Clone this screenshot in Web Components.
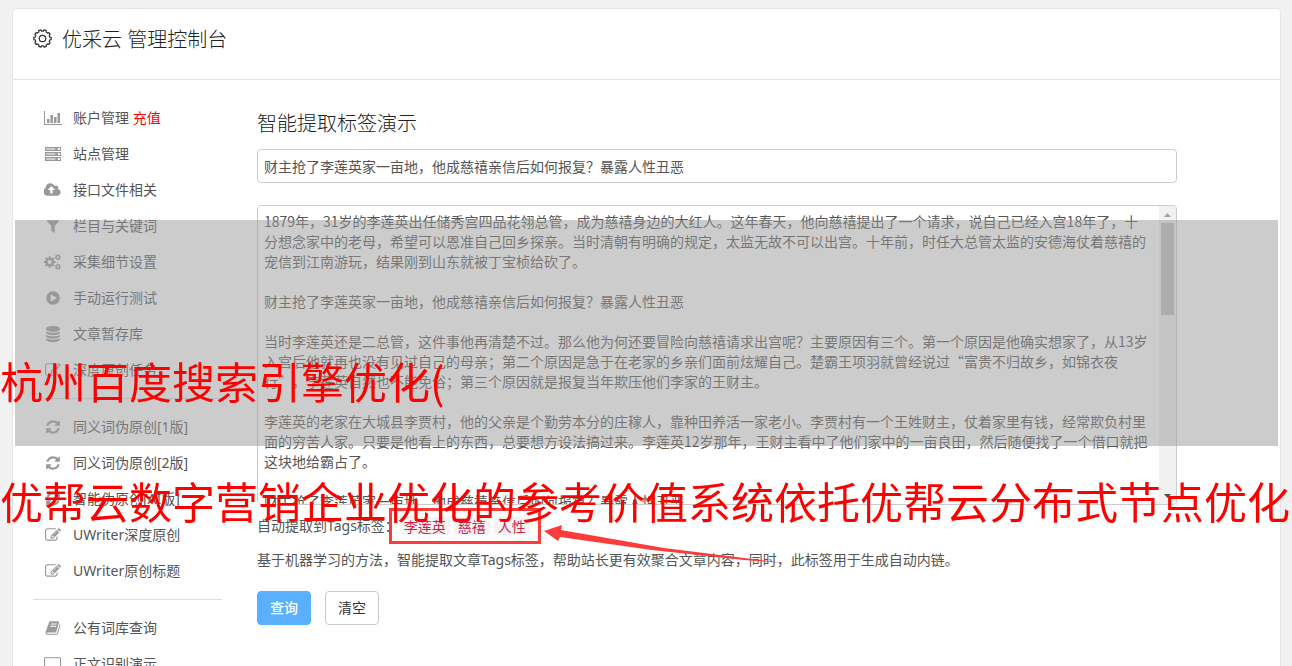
<!DOCTYPE html>
<html lang="zh-CN">
<head>
<meta charset="utf-8">
<title>优采云 管理控制台</title>
<style>
html, body { margin: 0; height: 100%; }
body {
  overflow: hidden; position: relative; background: #f1f1f1; color: #555;
  font: 14px/20px "Noto Sans", "Noto Sans CJK SC", sans-serif;
  text-spacing-trim: space-all;
}
</style>
</head>
<body>
<console-page>
  <side-nav slot="nav">
    <nav-item icon="chart">账户管理 <b>充值</b></nav-item>
    <nav-item icon="server">站点管理</nav-item>
    <nav-item icon="cloud">接口文件相关</nav-item>
    <nav-item icon="filter">栏目与关键词</nav-item>
    <nav-item icon="cogs">采集细节设置</nav-item>
    <nav-item icon="play">手动运行测试</nav-item>
    <nav-item icon="database">文章暂存库</nav-item>
    <nav-item icon="edit">深度原创任务</nav-item>
    <hr>
    <nav-item icon="refresh">同义词伪原创[1版]</nav-item>
    <nav-item icon="refresh">同义词伪原创[2版]</nav-item>
    <nav-item icon="refresh">智能伪原创[AI版]</nav-item>
    <nav-item icon="edit">UWriter深度原创</nav-item>
    <nav-item icon="edit">UWriter原创标题</nav-item>
    <hr>
    <nav-item icon="book">公有词库查询</nav-item>
    <nav-item icon="laptop">正文识别演示</nav-item>
  </side-nav>
  <tag-demo></tag-demo>
</console-page>
<banner-overlay>
  <span slot="first">杭州百度搜索引擎优化(</span>
  <span slot="second">优帮云数字营销企业优化的参考价值系统依托优帮云分布式节点优化</span>
</banner-overlay>

<script>
// Closed outline of a gear centred on (cx, cy).
function gear(cx, cy, outer, inner, teeth) {
  const pts = [];
  for (let i = 0; i < teeth; i++) {
    const a = i * 2 * Math.PI / teeth, s = Math.PI / teeth;
    for (const [d, r] of [[-0.62, inner], [-0.4, outer], [0.4, outer], [0.62, inner]]) {
      pts.push((cx + r * Math.cos(a + d * s)).toFixed(2) + ' ' + (cy + r * Math.sin(a + d * s)).toFixed(2));
    }
  }
  return 'M' + pts.join('L') + 'z';
}
function hole(cx, cy, r) {
  return `M${cx - r} ${cy}a${r} ${r} 0 1 0 ${2 * r} 0a${r} ${r} 0 1 0 ${-2 * r} 0z`;
}
const disc = 'q119 84 325 127t443 43 443-43 325-127v170q0 69-103 128t-280 93.500-385 34.500-385-34.500-280-93.500-103-128z';
const ICONS = {
  chart: [2048, 'M0 112h112v1456h1936v112h-2048zM336 1008h280v448h-280zM728 560h280v896h-280zM1120 784h280v672h-280zM1512 336h280v1120h-280z'],
  server: [1792, [112, 672, 1232].map(y => `M0 ${y}h1792v448h-1792zM128 ${y + 168}v112h1024v-112zM1440 ${y + 112}v224h224v-224z`).join('')],
  cloud: [1920, 'M1216 864q0-14-9-23l-352-352q-9-9-23-9t-23 9l-351 351q-10 12-10 24 0 14 9 23t23 9h224v352q0 13 9.500 22.500t22.500 9.500h192q13 0 22.500-9.500t9.500-22.500v-352h224q13 0 22.500-9.500t9.500-22.500zm640 288q0 159-112.500 271.500t-271.500 112.500h-1088q-185 0-316.500-131.500t-131.500-316.500q0-130 70-240t188-165q-2-30-2-43 0-212 150-362t362-150q156 0 285.500 87t188.500 231q71-62 166-62 106 0 181 75t75 181q0 76-41 138 130 31 213.500 135.500t83.500 238.500z'],
  filter: [1792, 'M1595 295q17 41-14 70l-493 493v742q0 42-39 59-13 5-25 5-27 0-45-19l-256-256q-19-19-19-45v-486l-493-493q-31-29-14-70 17-39 59-39h1280q42 0 59 39z'],
  cogs: [1920, gear(640, 896, 660, 500, 8) + hole(640, 896, 230) + gear(1560, 360, 360, 260, 7) + hole(1560, 360, 120) + gear(1560, 1430, 360, 260, 7) + hole(1560, 1430, 120)],
  play: [1792, hole(896, 896, 768) + 'M640 560v672q0 60 60 32l544-320q44-48 0-96l-544-320q-60-28-60 32z'],
  database: [1792, 'M896 0q208 0 385 34.500t280 93.500 103 128v128q0 69-103 128t-280 93.500-385 34.500-385-34.500-280-93.500-103-128v-128q0-69 103-128t280-93.500 385-34.500z' + [598, 982, 1366].map(y => `M128 ${y}${disc}`).join('')],
  edit: [1792, 'M888 1184l116-116-152-152-116 116v56h96v96h56zm440-720q-16-16-33 1l-350 350q-17 17-1 33t33-1l350-350q17-17 1-33zm80 594v190q0 119-84.500 203.500t-203.500 84.500h-832q-119 0-203.500-84.500t-84.500-203.500v-832q0-119 84.500-203.500t203.500-84.500h832q63 0 117 25 15 7 18 23 3 17-9 29l-49 49q-14 14-32 8-23-6-45-6h-832q-66 0-113 47t-47 113v832q0 66 47 113t113 47h832q66 0 113-47t47-113v-126q0-13 9-22l64-64q15-15 35-7t20 29zm-96-738l288 288-672 672h-288v-288zm444 132l-92 92-288-288 92-92q28-28 68-28t68 28l152 152q28 28 28 68t-28 68z'],
  refresh: [1792, 'M1639 1056q0 5-1 7-64 268-268 434.500t-478 166.500q-146 0-282.500-55t-243.500-157l-129 129q-19 19-45 19t-45-19-19-45v-448q0-26 19-45t45-19h448q26 0 45 19t19 45-19 45l-137 137q71 66 161 102t187 36q134 0 250-65t186-179q11-17 53-117 8-23 30-23h192q13 0 22.500 9.500t9.500 22.500zm25-800v448q0 26-19 45t-45 19h-448q-26 0-45-19t-19-45 19-45l138-138q-148-137-349-137-134 0-250 65t-186 179q-11 17-53 117-8 23-30 23h-199q-13 0-22.500-9.500t-9.500-22.500v-7q65-268 270-434.500t480-166.500q146 0 284 55.500t245 156.500l130-129q19-19 45-19t45 19 19 45z'],
  book: [1792, 'M1703 478q40 57 18 129l-275 906q-19 64-76.500 107.500t-122.500 43.500h-923q-77 0-148.500-53.500t-99.500-131.500q-24-67-2-127 0-4 3-27t4-37q1-8-3-21.500t-3-19.500q2-11 8-21t16.500-23.500 16.500-23.500q23-38 45-91.500t30-91.500q3-10 .5-30t-.5-28q3-11 17-28t17-23q21-36 42-92t25-90q1-9-2.500-32t.5-28q4-13 22-30.500t22-22.500q19-26 42.500-84.500t27.500-96.500q1-8-3-25.500t-2-26.500q2-8 9-18t18-23 17-21q8-12 16.500-30.500t15-35 16-36 19.500-32 26.500-23.500 36-11.500 47.500 5.500l-1 3q38-9 51-9h761q74 0 114 56t18 130l-274 906q-36 119-71.500 153.500t-128.500 34.500h-869q-27 0-38 15-11 16-1 43 24 70 144 70h923q29 0 56-15.500t35-41.500l300-987q7-22 5-57 38 15 59 43zm-1064 2q-4 13 2 22.500t20 9.500h608q13 0 25.500-9.500t16.500-22.500l21-64q4-13-2-22.500t-20-9.500h-608q-13 0-25.500 9.500t-16.500 22.500zm-83 256q-4 13 2 22.500t20 9.500h608q13 0 25.500-9.500t16.500-22.500l21-64q4-13-2-22.500t-20-9.500h-608q-13 0-25.500 9.500t-16.500 22.500z'],
  laptop: [1920, 'M160 128h1600q160 0 160 160v960q0 160-160 160h-1600q-160 0-160-160v-960q0-160 160-160zM192 256q-64 0-64 64v896q0 64 64 64h1536q64 0 64-64v-896q0-64-64-64zM0 1536h1920v128h-1920z']
};

function define(name, html, setup) {
  customElements.define(name, class extends HTMLElement {
    constructor() {
      super();
      this.attachShadow({ mode: 'open' }).innerHTML = html;
    }
    connectedCallback() { if (setup) setup(this, this.shadowRoot); }
  });
}

define('console-page', `
<style>
:host { display: block; height: 100%; overflow: hidden; box-sizing: border-box; padding: 8px 11px 0 12px; }
.card { background: #fff; border: 1px solid #e5e5e5; border-radius: 4px; min-height: 100%; }
header { display: flex; align-items: center; gap: 10px; height: 71px; box-sizing: border-box; padding: 0 20px 8px; border-bottom: 1px solid #e2e2e2; }
header svg { width: 19px; height: 19px; padding-bottom: 4px; flex: none; }
h1 { margin: 0; font-size: 20px; line-height: 28px; font-weight: 300; color: #222; }
.body { display: flex; gap: 35px; padding: 20px; }
.main { flex: 1; min-width: 0; }
</style>
<div class="card">
  <header>
    <svg viewBox="0 0 20 20" fill="none" stroke="#333" stroke-width="1.300" stroke-linejoin="round"><path d="${gear(10, 10, 9.2, 7.8, 10)}"/><circle cx="10" cy="10" r="3.400"/></svg>
    <h1>优采云 管理控制台</h1>
  </header>
  <div class="body"><slot name="nav"></slot><div class="main"><slot></slot></div></div>
</div>`);

define('side-nav', `
<style>
:host { display: block; width: 189px; flex: none; }
nav { display: flex; flex-direction: column; }
::slotted(hr) { margin: 10px 0; width: 100%; border: 0; border-top: 1px solid #ddd; }
</style>
<nav><slot></slot></nav>`);

define('nav-item', `
<style>
:host { display: block; }
a { display: flex; align-items: center; height: 36px; padding-left: 10px; gap: 10px; color: #555; text-decoration: none; white-space: pre; }
.icon { width: 20px; display: flex; justify-content: center; color: #999; }
svg { height: 16px; fill: currentColor; fill-rule: evenodd; }
::slotted(b) { font-weight: 400; color: #f00; }
</style>
<a href="#"><span class="icon"></span><span><slot></slot></span></a>`,
(el, root) => {
  const [w, d] = ICONS[el.getAttribute('icon')];
  root.querySelector('.icon').innerHTML = `<svg viewBox="0 0 ${w} 1792" aria-hidden="true"><path d="${d}"/></svg>`;
});

define('article-box', `
<style>
:host { display: flex; height: 300px; box-sizing: border-box; border: 1px solid #ccc; border-radius: 4px; overflow: hidden; }
textarea { flex: 1; min-width: 0; margin: 0; border: 0; padding: 5px 8px 5px 6px; resize: none; outline: 0; scrollbar-width: none; background: #fff; color: #555; font: 14px/20px "Noto Sans CJK SC", sans-serif; text-spacing-trim: space-all; }
.bar { width: 17px; flex: none; background: #f1f1f1; display: flex; flex-direction: column; align-items: center; }
.arrow { height: 17px; display: flex; align-items: center; }
.thumb { width: 13px; height: 92px; background: #c1c1c1; margin-bottom: auto; }
svg { width: 7px; height: 4px; }
</style>
<textarea aria-label="文章内容">1879年，31岁的李莲英出任储秀宫四品花翎总管，成为慈禧身边的大红人。这年春天，他向慈禧提出了一个请求，说自己已经入宫18年了，十分想念家中的老母，希望可以恩准自己回乡探亲。当时清朝有明确的规定，太监无故不可以出宫。十年前，时任大总管太监的安德海仗着慈禧的宠信到江南游玩，结果刚到山东就被丁宝桢给砍了。

财主抢了李莲英家一亩地，他成慈禧亲信后如何报复？暴露人性丑恶

当时李莲英还是二总管，这件事他再清楚不过。那么他为何还要冒险向慈禧请求出宫呢？主要原因有三个。第一个原因是他确实想家了，从13岁入宫后他就再也没有见过自己的母亲；第二个原因是急于在老家的乡亲们面前炫耀自己。楚霸王项羽就曾经说过“富贵不归故乡，如锦衣夜行”，李莲英自然也不能免俗；第三个原因就是报复当年欺压他们李家的王财主。

李莲英的老家在大城县李贾村，他的父亲是个勤劳本分的庄稼人，靠种田养活一家老小。李贾村有一个王姓财主，仗着家里有钱，经常欺负村里面的穷苦人家。只要是他看上的东西，总要想方设法搞过来。李莲英12岁那年，王财主看中了他们家中的一亩良田，然后随便找了一个借口就把这块地给霸占了。

财主抢了李莲英家一亩地，他成慈禧亲信后如何报复？暴露人性丑恶</textarea>
<div class="bar">
  <span class="arrow"><svg viewBox="0 0 7 4"><path d="M0 4L3.500 0L7 4z" fill="#a3a3a3"/></svg></span>
  <span class="thumb"></span>
  <span class="arrow"><svg viewBox="0 0 7 4"><path d="M0 0L3.500 4L7 0z" fill="#505050"/></svg></span>
</div>`);

define('tag-demo', `
<style>
:host { display: block; max-width: 920px; padding-top: 9px; }
h2 { margin: 0 0 10px; font-size: 20px; line-height: 30px; font-weight: 300; color: #222; }
input { display: block; width: 100%; height: 34px; box-sizing: border-box; margin: 0 0 22px; border: 1px solid #ccc; border-radius: 4px; padding: 0 6px; color: #555; font: inherit; outline: 0; }
.tags { position: relative; display: flex; align-items: center; width: max-content; height: 36px; margin-top: 3px; }
.list { display: flex; align-items: center; gap: 4px; margin-left: -10px; height: 36px; box-sizing: border-box; border: 3px solid #fa3c3a; padding: 0 8px; }
code { font: 14px/16px "Noto Sans CJK SC", sans-serif; color: #c7254e; background: #f9f2f4; border-radius: 4px; padding: 1px 4px; }
.pointer { position: absolute; left: 100%; top: 11px; margin-left: 3px; width: 241px; height: 48px; z-index: 1; }
p { margin: 6px 0 21px; }
.buttons { display: flex; gap: 14px; }
button { width: 54px; height: 34px; padding: 0; border: 1px solid #ccc; border-radius: 4px; background: #fff; color: #333; font: inherit; }
.primary { border-color: #5aafff; background: #5aafff; color: #fff; font-weight: 500; }
</style>
<h2><label for="title">智能提取标签演示</label></h2>
<input id="title" type="text" value="财主抢了李莲英家一亩地，他成慈禧亲信后如何报复？暴露人性丑恶">
<article-box></article-box>
<div class="tags">
  <span>自动提取到Tags标签：</span>
  <span class="list"><code>李莲英</code><code>慈禧</code><code>人性</code></span>
  <svg class="pointer" viewBox="0 0 241 48" aria-hidden="true"><path d="M0 12L18 6L17 11L120 29L241 44L200 41L108 31L16 18L14 22z" fill="#fa3c3a"/></svg>
</div>
<p>基于机器学习的方法，智能提取文章Tags标签，帮助站长更有效聚合文章内容，同时，此标签用于生成自动内链。</p>
<div class="buttons"><button class="primary" type="button">查询</button><button type="button">清空</button></div>`);

define('banner-overlay', `
<style>
:host { position: absolute; top: 220px; left: 0; right: 0; z-index: 5; pointer-events: none; overflow: hidden; }
.shade { height: 226px; margin: 0 14px 0 15px; background: rgba(153, 153, 153, .5); }
.lines { display: flex; flex-direction: column; margin-top: -126px; font: 43px/120px "Noto Sans CJK SC", sans-serif; color: #f00; white-space: nowrap; }
</style>
<div class="shade"></div>
<div class="lines"><slot name="first"></slot><slot name="second"></slot></div>`);
</script>
</body>
</html>
